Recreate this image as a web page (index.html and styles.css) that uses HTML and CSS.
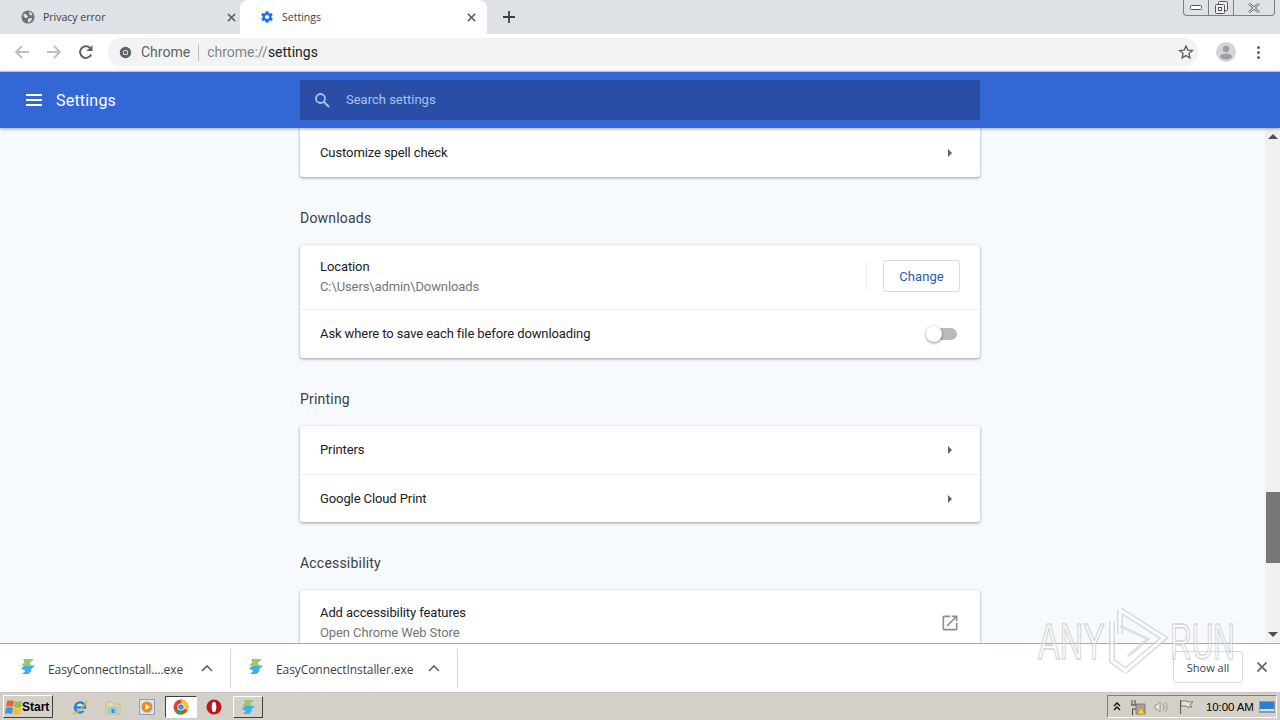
FILE: index.html
```html
<!DOCTYPE html>
<html lang="en">
<head>
    <meta charset="UTF-8">
    <title>Settings</title>
    <link rel="stylesheet" href="styles.css">
</head>
<body>
    <!-- Tab strip -->
    <div class="tabstrip">
        <div class="tab">
            <svg class="favicon" viewBox="0 0 16 16"><circle cx="8" cy="8" r="7.500" fill="#6f7276"/><path d="M3 4l3 1 2 2-1 2-2 0-2-2zM9 2l3 1 1 3-3 0zM8 10l4-1 1 1-3 4-2 0z" fill="#dee1e6"/></svg>
            <span class="tab-title">Privacy error</span>
            <svg class="tab-close" viewBox="0 0 10 10"><path d="M1 1l8 8M9 1l-8 8" stroke="#5f6368" stroke-width="1.7"/></svg>
        </div>
        <div class="tab tab-active">
            <svg class="favicon" viewBox="0 0 24 24"><path fill="#1a73e8" d="M19.4 13a7.5 7.5 0 0 0 0-2l2.1-1.6a.5.5 0 0 0 .1-.7l-2-3.4a.5.5 0 0 0-.6-.2l-2.5 1a7.3 7.3 0 0 0-1.7-1l-.4-2.7a.5.5 0 0 0-.5-.4h-4a.5.5 0 0 0-.5.4l-.4 2.7a7.3 7.3 0 0 0-1.7 1l-2.5-1a.5.5 0 0 0-.6.2l-2 3.4a.5.5 0 0 0 .1.7L4.6 11a7.5 7.5 0 0 0 0 2l-2.1 1.6a.5.5 0 0 0-.1.7l2 3.4c.1.2.4.3.6.2l2.5-1a7.3 7.3 0 0 0 1.7 1l.4 2.7c0 .2.2.4.5.4h4c.3 0 .5-.2.5-.4l.4-2.7a7.3 7.3 0 0 0 1.7-1l2.5 1c.2.1.5 0 .6-.2l2-3.4a.5.5 0 0 0-.1-.7zM12 15.500a3.500 3.500 0 1 1 0-7 3.500 3.500 0 0 1 0 7z"/></svg>
            <span class="tab-title">Settings</span>
            <svg class="tab-close" viewBox="0 0 10 10"><path d="M1 1l8 8M9 1l-8 8" stroke="#5f6368" stroke-width="1.7"/></svg>
        </div>
        <svg class="new-tab" viewBox="0 0 12 12"><path d="M6 0v12M0 6h12" stroke="#3c4043" stroke-width="1.8"/></svg>
        <div class="window-btns">
            <div class="win-btn win-min"><svg viewBox="0 0 12 6" width="12" height="6"><rect x="0.5" y="0.5" width="11" height="4" rx="1" fill="#fff" stroke="#555"/></svg></div>
            <div class="win-btn win-max"><svg viewBox="0 0 13 13" width="13" height="13"><rect x="3.5" y="0.5" width="9" height="9" rx="1" fill="#eee" stroke="#555"/><rect x="0.5" y="3.5" width="9" height="9" rx="1" fill="#eee" stroke="#555"/><rect x="3.5" y="6.5" width="3" height="3" fill="#fff" stroke="#555"/></svg></div>
            <div class="win-btn win-close"><svg viewBox="0 0 12 10" width="12" height="10"><path d="M1 0.5l10 9M11 0.5l-10 9" stroke="#666" stroke-width="2.4"/><path d="M1 0.5l10 9M11 0.5l-10 9" stroke="#fff" stroke-width="1"/></svg></div>
        </div>
    </div>

    <!-- Toolbar -->
    <div class="toolbar">
        <svg class="nav-icon" viewBox="0 0 16 16"><path d="M15 8H2M8 2L2 8l6 6" fill="none" stroke="#bcc0c4" stroke-width="1.8"/></svg>
        <svg class="nav-icon" viewBox="0 0 16 16"><path d="M1 8h13M8 2l6 6-6 6" fill="none" stroke="#bcc0c4" stroke-width="1.8"/></svg>
        <svg class="nav-icon" viewBox="0 0 16 16"><path d="M13.2 10.5A5.8 5.8 0 1 1 12 4" fill="none" stroke="#5f6368" stroke-width="2"/><path d="M14.5 1v6h-6z" fill="#5f6368"/></svg>
        <div class="omnibox">
            <svg class="omni-icon" viewBox="0 0 16 16"><circle cx="8" cy="8" r="7" fill="#5f6368"/><circle cx="8" cy="8" r="3.2" fill="#fff"/><circle cx="8" cy="8" r="2.3" fill="#5f6368"/></svg>
            <span class="omni-chip">Chrome</span>
            <span class="omni-sep"></span>
            <span class="omni-url">chrome://<b>settings</b></span>
            <svg class="omni-star" viewBox="0 0 24 24"><path d="M12 3l2.7 6.2 6.8.6-5.1 4.5 1.5 6.6L12 17.4l-5.9 3.5 1.5-6.6-5.1-4.5 6.8-.6z" fill="none" stroke="#5f6368" stroke-width="2"/></svg>
        </div>
        <div class="avatar">
            <svg viewBox="0 0 20 20" width="20" height="20"><circle cx="10" cy="10" r="10" fill="#d3d5d8"/><circle cx="10" cy="7" r="3.2" fill="#9b9ea2"/><ellipse cx="10" cy="14.5" rx="6" ry="3" fill="#9b9ea2"/></svg>
        </div>
        <div class="dots"><i></i><i></i><i></i></div>
    </div>

    <!-- Settings header -->
    <header class="settings-header">
        <div class="header-left">
            <div class="hamburger"><i></i><i></i><i></i></div>
            <span class="header-title">Settings</span>
        </div>
        <div class="search">
            <svg class="search-icon" viewBox="0 0 16 16"><circle cx="6.5" cy="6.5" r="4.5" fill="none" stroke="#a9c1f0" stroke-width="1.8"/><path d="M10 10l5 5" stroke="#a9c1f0" stroke-width="2"/></svg>
            <span>Search settings</span>
        </div>
    </header>

    <!-- Page body -->
    <div class="main">
        <div class="content">
            <div class="column">
                <div class="card card-first">
                    <div class="row row-link">
                        <span>Customize spell check</span>
                        <span class="arrow"></span>
                    </div>
                </div>

                <h2>Downloads</h2>
                <div class="card">
                    <div class="row row-two">
                        <div>
                            <div>Location</div>
                            <div class="secondary">C:\Users\admin\Downloads</div>
                        </div>
                        <div class="change-wrap"><button class="change-btn">Change</button></div>
                    </div>
                    <div class="row row-toggle">
                        <span>Ask where to save each file before downloading</span>
                        <span class="toggle"><i></i></span>
                    </div>
                </div>

                <h2>Printing</h2>
                <div class="card">
                    <div class="row row-link row-printers">
                        <span>Printers</span>
                        <span class="arrow"></span>
                    </div>
                    <div class="row row-link row-border">
                        <span>Google Cloud Print</span>
                        <span class="arrow"></span>
                    </div>
                </div>

                <h2>Accessibility</h2>
                <div class="card">
                    <div class="row row-two row-a11y">
                        <div>
                            <div>Add accessibility features</div>
                            <div class="secondary">Open Chrome Web Store</div>
                        </div>
                        <svg class="external" viewBox="0 0 24 24"><path d="M19 19H5V5h7V3H5a2 2 0 0 0-2 2v14c0 1.1.9 2 2 2h14a2 2 0 0 0 2-2v-7h-2zM14 3v2h3.6l-9.8 9.8 1.4 1.4L19 6.4V10h2V3z" fill="#8a8d91"/></svg>
                    </div>
                </div>
            </div>
        </div>
        <div class="scrollbar">
            <span class="scroll-up"></span>
            <span class="scroll-thumb"></span>
            <span class="scroll-down"></span>
        </div>
    </div>

    <!-- Download shelf -->
    <div class="shelf">
        <div class="dl-item dl-first">
            <svg class="dl-icon" viewBox="0 0 16 16"><path d="M4 1h10L10 5l2 2H2L5 4z" fill="#9cc765"/><path d="M5 7h10l-4 4 1 1-3 3H3l3-3-4-2z" fill="#3fb0ea"/></svg>
            <span class="dl-name">EasyConnectInstall....exe</span>
            <svg class="dl-caret" viewBox="0 0 12 8"><path d="M1 7l5-5 5 5" fill="none" stroke="#5f6368" stroke-width="1.6"/></svg>
        </div>
        <div class="dl-item">
            <svg class="dl-icon" viewBox="0 0 16 16"><path d="M4 1h10L10 5l2 2H2L5 4z" fill="#9cc765"/><path d="M5 7h10l-4 4 1 1-3 3H3l3-3-4-2z" fill="#3fb0ea"/></svg>
            <span class="dl-name">EasyConnectInstaller.exe</span>
            <svg class="dl-caret" viewBox="0 0 12 8"><path d="M1 7l5-5 5 5" fill="none" stroke="#5f6368" stroke-width="1.6"/></svg>
        </div>
        <div class="shelf-right">
            <button class="show-all">Show all</button>
            <svg class="shelf-close" viewBox="0 0 10 10"><path d="M0.5 0.5l9 9M9.500 0.5l-9 9" stroke="#5f6368" stroke-width="1.6"/></svg>
        </div>
    </div>

    <!-- Windows taskbar -->
    <div class="taskbar">
        <button class="start">
            <svg viewBox="0 0 18 18" width="18" height="18"><path d="M2 3c2-1 4-1 7 0L8 9C5 8 3 8 1 9z" fill="#e2683a"/><path d="M10 3c2 1 5 1 7 0l-1 6c-2 1-5 1-7 0z" fill="#93bb45"/><path d="M1 10c2-1 4-1 7 0l-1 6c-3-1-5-1-7 0z" fill="#4a90d8"/><path d="M9 10c2 1 5 1 7 0l-1 6c-2 1-5 1-7 0z" fill="#f1bf35"/></svg>
            <span>Start</span>
        </button>
        <div class="quick">
            <svg class="task-icon" viewBox="0 0 16 16"><path d="M3.500 8.500h9.500A5 5 0 1 0 11.500 12" fill="#d8ecf8" stroke="#2a80cf" stroke-width="2.400"/><path d="M0.500 14.500c3 1 11-5 14.500-13" fill="none" stroke="#e0b040" stroke-width="1.400"/></svg>
            <svg class="task-icon" viewBox="0 0 16 16"><path d="M1 3h6l1 2h7v10H1z" fill="#ecd98c" stroke="#b8a96a" stroke-width=".6"/><rect x="2.500" y="7" width="11" height="7" fill="#9dcde0"/><rect x="6.500" y="10" width="3" height="4" fill="#4a8db0"/></svg>
            <svg class="task-icon task-media" viewBox="0 0 16 16"><rect x="0.500" y="0.500" width="15" height="15" fill="#d7e4f3" stroke="#7fa3cc"/><circle cx="8" cy="8" r="5.500" fill="#ee8a1d"/><path d="M6.500 5l4.500 3-4.500 3z" fill="#fff"/></svg>
        </div>
        <div class="task-btn task-btn-active">
            <svg class="task-icon" viewBox="0 0 16 16"><circle cx="8" cy="8" r="7.500" fill="#dc4437"/><path d="M8 8L1.500 12A7.500 7.500 0 0 0 10 15.200z" fill="#2fa04f"/><path d="M8 .5a7.500 7.500 0 0 1 6.500 11L8 8z" fill="#f6c026"/><path d="M8 .5A7.500 7.500 0 0 1 15.500 8H8z" fill="#f6c026"/><circle cx="8" cy="8" r="3.600" fill="#fff"/><circle cx="8" cy="8" r="2.800" fill="#4a8af0"/></svg>
        </div>
        <svg class="task-icon task-opera" viewBox="0 0 16 16"><circle cx="8" cy="8" r="7.500" fill="#c4121a"/><ellipse cx="8" cy="8" rx="2.300" ry="5.200" fill="#fff"/></svg>
        <div class="task-btn task-btn-raised">
            <svg class="task-icon" viewBox="0 0 16 16"><path d="M4 1h10L10 5l2 2H2L5 4z" fill="#9cc765"/><path d="M5 7h10l-4 4 1 1-3 3H3l3-3-4-2z" fill="#3fb0ea"/></svg>
        </div>
        <div class="tray">
            <svg class="tray-chevron" viewBox="0 0 8 10"><path d="M1 4l3-3 3 3M1 8l3-3 3 3" fill="none" stroke="#111" stroke-width="1.400"/></svg>
            <svg class="tray-icon" viewBox="0 0 16 16"><path d="M2 1v5M5 1v5M1 6h6v4H2.500v6" stroke="#444" fill="none"/><rect x="6" y="5" width="9" height="10" fill="#a8a59c" stroke="#555" stroke-width=".6"/><path d="M11 8l4 7H7z" fill="#f5d033" stroke="#8d7a1a" stroke-width=".5"/></svg>
            <svg class="tray-icon" viewBox="0 0 16 16"><path d="M1 6h2l3-3v10l-3-3H1z" fill="#e6e6e6" stroke="#8a8a8a" stroke-width=".8"/><path d="M9 4.500c1.500 2 1.500 5 0 7M11.500 3c2 3 2 7 0 10" fill="none" stroke="#999"/></svg>
            <svg class="tray-icon" viewBox="0 0 16 16"><path d="M2.500 1v14" stroke="#666" stroke-width="1.200"/><path d="M3 2h6l1 1h5l-3 3 2 2H9L8 7H3z" fill="#e6e3dc" stroke="#666" stroke-width=".8"/></svg>
            <span class="clock">10:00 AM</span>
            <svg class="tray-desktop" viewBox="0 0 16 12"><rect width="16" height="12" fill="#8d9aa8"/><rect x="1" y="1" width="14" height="8" fill="#2c7fcf"/><rect x="1" y="8" width="14" height="2" fill="#cfe5f7"/></svg>
        </div>
    </div>

    <!-- Sandbox watermark over the page -->
    <div class="watermark">
        <span class="wm-any">ANY</span>
        <svg class="wm-logo" viewBox="0 0 64 72" width="64" height="72"><path d="M14 4L58 32 18 66M14 4v24M6 15v40l14 10" fill="none" stroke="#c4c4c4" stroke-width="6"/><path d="M14 4L58 32 18 66M14 4v24M6 15v40l14 10" fill="none" stroke="#fff" stroke-width="3"/><path d="M14 20L42 33 22 50" fill="none" stroke="#d0d0d0" stroke-width="3"/></svg>
        <span class="wm-run">RUN</span>
    </div>
</body>
</html>
```

FILE: styles.css
```css
* {
    box-sizing: border-box;
}

html, body {
    height: 100%;
}

body {
    margin: 0;
    height: 720px;
    overflow: hidden;
    display: flex;
    flex-direction: column;
    position: relative;
    font-family: Roboto, "Liberation Sans", sans-serif;
    font-size: 13px;
    color: #202124;
    background: #fff;
}

/* tab strip */
.tabstrip {
    height: 34px;
    flex: none;
    display: flex;
    align-items: center;
    background: #dee1e6;
    position: relative;
}

.tab {
    width: 240px;
    height: 34px;
    padding: 0 4px 0 21px;
    display: flex;
    align-items: center;
    font-family: "Open Sans", "Liberation Sans", sans-serif;
    font-size: 10.5px;
    color: #3c4043;
}

.tab-title {
    flex: 1;
    margin-top: -1px;
}

.tab-active {
    width: 247px;
    padding-left: 20px;
    padding-right: 11px;
    background: #fff;
    border-radius: 8px 8px 0 0;
}

.favicon {
    width: 14px;
    height: 14px;
    flex: none;
    margin-right: 8px;
}

.tab-close {
    width: 9px;
    height: 9px;
    flex: none;
}

.new-tab {
    width: 12px;
    height: 12px;
    margin-left: 16px;
}

.window-btns {
    margin-left: auto;
    margin-right: 5px;
    margin-top: -18px;
    height: 16px;
    width: 92px;
    display: flex;
    background: #dee1e6;
    border: 1px solid #7b7e83;
    border-top: none;
    border-radius: 0 0 4px 4px;
}

.win-btn {
    display: flex;
    align-items: center;
    justify-content: center;
    border-right: 1px solid #7b7e83;
    width: 25px;
}

.win-close {
    border-right: none;
    flex: 1;
}

/* toolbar */
.toolbar {
    height: 37px;
    flex: none;
    display: flex;
    align-items: center;
    background: #fff;
    padding: 0 0 1px 14px;
}

.nav-icon {
    width: 16px;
    height: 16px;
    flex: none;
    margin-right: 16px;
}

.omnibox {
    width: 1090px;
    height: 28px;
    margin-left: -2px;
    padding: 0 4px 0 11px;
    border-radius: 14px;
    background: #f1f3f4;
    display: flex;
    align-items: center;
    font-size: 14px;
    color: #5f6368;
}

.omni-icon {
    width: 13px;
    height: 13px;
    margin-right: 9px;
}

.omni-sep {
    width: 1px;
    height: 17px;
    background: #b9bcc0;
    margin: 0 8px;
}

.omni-url {
    flex: 1;
    color: #80868b;
}

.omni-url b {
    font-weight: 400;
    color: #202124;
}

.omni-star {
    width: 16px;
    height: 16px;
}

.avatar {
    width: 20px;
    height: 20px;
    margin-left: 18px;
}

.dots {
    margin-left: 21px;
    display: flex;
    flex-direction: column;
    gap: 2px;
}

.dots i {
    width: 3px;
    height: 3px;
    background: #5f6368;
    border-radius: 50%;
}

/* blue settings header */
.settings-header {
    height: 57px;
    flex: none;
    display: flex;
    align-items: center;
    background: #3367d6;
    border-top: 1px solid #b9c5dc;
    position: relative;
    z-index: 2;
    box-shadow: 0 1px 3px rgba(0,0,0,0.35);
}

.header-left {
    width: 300px;
    padding-left: 26px;
    display: flex;
    align-items: center;
}

.hamburger {
    width: 16px;
    margin-right: 14px;
    display: flex;
    flex-direction: column;
    gap: 3px;
}

.hamburger i {
    height: 2px;
    background: #fff;
}

.header-title {
    color: #fff;
    font-size: 16px;
    letter-spacing: 0.2px;
}

.search {
    width: 680px;
    height: 40px;
    margin-top: -1px;
    padding-left: 14px;
    display: flex;
    align-items: center;
    background: #2a4ea6;
    color: #a9c1f0;
    font-size: 13px;
}

.search-icon {
    width: 16px;
    height: 16px;
    margin-right: 16px;
}

/* main content */
.main {
    flex: 1;
    min-height: 0;
    display: flex;
    background: #f6f9fd;
}

.content {
    flex: 1;
    min-width: 0;
    overflow: hidden;
    padding-left: 300px;
}

.column {
    width: 680px;
}

.card {
    background: #fff;
    border-radius: 3px;
    box-shadow: 0 1px 2px rgba(60,64,67,0.3), 0 1px 3px 1px rgba(60,64,67,0.15);
}

.card-first {
    border-radius: 0 0 3px 3px;
}

.card-first .row-link {
    height: 49px;
}

h2 {
    margin: 0;
    height: 68px;
    padding-top: 31px;
    font-size: 14px;
    font-weight: 400;
    letter-spacing: 0.2px;
    line-height: 20px;
    color: #3c4043;
}

.row {
    display: flex;
    align-items: center;
    justify-content: space-between;
    padding: 0 20px;
    font-size: 13px;
    letter-spacing: -0.1px;
    color: #202124;
}

.row-link {
    height: 48px;
}

.row-printers span:first-child {
    margin-bottom: 2px;
}

.row-border {
    border-top: 1px solid #eef0f2;
}

.row-two {
    height: 64px;
    line-height: 20px;
}

.row-a11y {
    padding-top: 2px;
}

.row-toggle {
    height: 49px;
    padding-bottom: 1px;
    border-top: 1px solid #eef0f2;
}

.secondary {
    color: #757575;
}

.arrow {
    width: 0;
    height: 0;
    margin-right: 8px;
    border-left: 4px solid #5f6368;
    border-top: 4px solid transparent;
    border-bottom: 4px solid transparent;
}

.change-wrap {
    height: 32px;
    padding-left: 16px;
    margin-top: -2px;
    border-left: 1px solid #eef0f2;
}

.change-btn {
    width: 77px;
    height: 32px;
    background: #fff;
    border: 1px solid #dadce0;
    border-radius: 3px;
    color: #2a5db0;
    font-family: Roboto, "Liberation Sans", sans-serif;
    font-size: 13px;
    font-weight: 400;
    letter-spacing: 0.1px;
}

.toggle {
    width: 30px;
    height: 12px;
    margin-right: 3px;
    margin-top: 1px;
    border-radius: 6px;
    background: #b9babd;
    display: block;
    position: relative;
}

.toggle i {
    position: absolute;
    left: -1px;
    top: -2px;
    width: 16px;
    height: 16px;
    border-radius: 50%;
    background: #fff;
    box-shadow: 0 1px 3px rgba(0,0,0,0.45);
}

.external {
    width: 20px;
    height: 20px;
}

/* scrollbar */
.scrollbar {
    width: 15px;
    flex: none;
    position: relative;
    background: #f1f1f1;
}

.scroll-thumb {
    position: absolute;
    left: 1px;
    right: 0;
    top: 364px;
    height: 71px;
    background: #787878;
}

.scroll-up, .scroll-down {
    position: absolute;
    left: 3px;
    width: 0;
    height: 0;
    border-left: 5px solid transparent;
    border-right: 5px solid transparent;
}

.scroll-up {
    top: 6px;
    border-bottom: 5px solid #505050;
}

.scroll-down {
    bottom: 6px;
    border-top: 5px solid #505050;
}

/* download shelf */
.shelf {
    height: 50px;
    flex: none;
    display: flex;
    align-items: center;
    background: #fff;
    border-top: 1px solid #a9abae;
    border-bottom: 1px solid #c4c4c4;
}

.dl-item {
    width: 227px;
    height: 39px;
    padding: 0 17px 0 16px;
    display: flex;
    align-items: center;
    border-right: 1px solid #d4d6d8;
    font-family: "Open Sans", "Liberation Sans", sans-serif;
    font-size: 12px;
    letter-spacing: -0.08px;
    color: #3c4043;
}

.dl-first {
    width: 231px;
    padding-left: 19px;
}

.dl-icon {
    width: 17px;
    height: 17px;
    margin-right: 12px;
    margin-top: -3px;
}

.dl-name {
    flex: 1;
    margin-top: 3px;
}

.dl-caret {
    width: 12px;
    height: 8px;
}

.shelf-right {
    margin-left: auto;
    display: flex;
    align-items: center;
    padding-right: 13px;
    margin-top: -2px;
}

.show-all {
    width: 70px;
    height: 32px;
    background: #fff;
    border: 1px solid #dadce0;
    border-radius: 3px;
    color: #3c4043;
    font-family: "Open Sans", "Liberation Sans", sans-serif;
    font-size: 11px;
}

.shelf-close {
    width: 10px;
    height: 10px;
    margin-left: 14px;
}

/* taskbar */
.taskbar {
    height: 27px;
    flex: none;
    display: flex;
    align-items: center;
    background: #d4d0c8;
    padding-left: 3px;
}

.start {
    width: 50px;
    height: 23px;
    padding: 0 0 0 1px;
    display: flex;
    align-items: center;
    background: #d4d0c8;
    border: 1px solid;
    border-color: #fff #404040 #404040 #fff;
    font-family: "Liberation Sans", sans-serif;
    font-size: 12px;
    font-weight: 700;
    color: #000;
}

.start svg {
    margin-right: -1px;
}

.quick {
    display: flex;
    align-items: center;
    gap: 17px;
    margin-left: 19px;
}

.task-icon {
    width: 16px;
    height: 16px;
    flex: none;
}

.task-media {
    margin-left: 1px;
}

.task-btn {
    width: 32px;
    height: 22px;
    display: flex;
    align-items: center;
    justify-content: center;
}

.task-btn-active {
    margin-left: 10px;
    background: #fff;
    border: 1px solid;
    border-color: #404040 #fff #fff #404040;
}

.task-opera {
    margin-left: 9px;
}

.task-btn-raised {
    margin-left: 11px;
    width: 30px;
    border: 1px solid;
    border-color: #fff #404040 #404040 #fff;
}

.tray {
    margin-left: auto;
    margin-right: 3px;
    width: 170px;
    height: 23px;
    padding: 0 1px 0 5px;
    display: flex;
    align-items: center;
    border: 1px solid;
    border-color: #808080 #fff #fff #808080;
    font-family: "Liberation Sans", sans-serif;
    font-size: 11.5px;
    letter-spacing: -0.1px;
    color: #000;
}

.tray-chevron {
    width: 8px;
    height: 10px;
    margin-right: 9px;
}

.tray-icon {
    width: 16px;
    height: 16px;
    margin-right: 8px;
}

.clock {
    margin-left: 4px;
    white-space: nowrap;
}

.tray-desktop {
    width: 16px;
    height: 12px;
    margin-left: auto;
}

/* watermark */
.watermark {
    position: absolute;
    left: 1038px;
    top: 606px;
    height: 72px;
    display: flex;
    align-items: center;
    opacity: 0.6;
    pointer-events: none;
    font-family: "Liberation Sans", sans-serif;
    font-size: 50px;
    line-height: 36px;
    color: rgba(255,255,255,0.7);
    -webkit-text-stroke: 1.5px #bdbdbd;
}

.wm-any, .wm-run {
    display: block;
    height: 36px;
    margin-top: 0;
    transform-origin: left center;
    white-space: nowrap;
}

.wm-any {
    width: 68px;
    transform: scaleX(0.65);
}

.wm-logo {
    flex: none;
}

.wm-run {
    width: 60px;
    transform: scaleX(0.6);
}
```
